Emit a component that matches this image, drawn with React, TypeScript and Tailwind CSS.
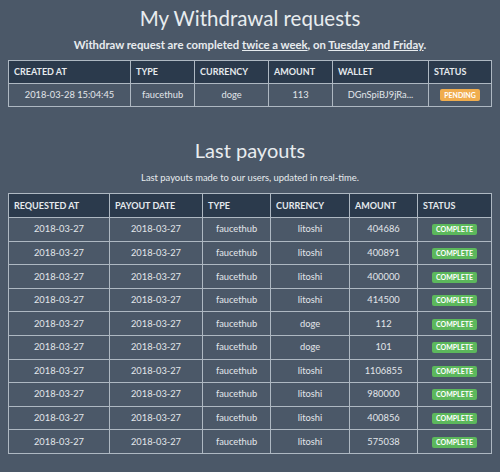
import React from 'react';

const font = { fontFamily: 'Lato, "Open Sans", sans-serif' };

const payouts = [
  ['2018-03-27', '2018-03-27', 'faucethub', 'litoshi', '404686'],
  ['2018-03-27', '2018-03-27', 'faucethub', 'litoshi', '400891'],
  ['2018-03-27', '2018-03-27', 'faucethub', 'litoshi', '400000'],
  ['2018-03-27', '2018-03-27', 'faucethub', 'litoshi', '414500'],
  ['2018-03-27', '2018-03-27', 'faucethub', 'doge', '112'],
  ['2018-03-27', '2018-03-27', 'faucethub', 'doge', '101'],
  ['2018-03-27', '2018-03-27', 'faucethub', 'litoshi', '1106855'],
  ['2018-03-27', '2018-03-27', 'faucethub', 'litoshi', '980000'],
  ['2018-03-27', '2018-03-27', 'faucethub', 'litoshi', '400856'],
  ['2018-03-27', '2018-03-27', 'faucethub', 'litoshi', '575038'],
];

const Th: React.FC<{ children: React.ReactNode; w: string }> = ({ children, w }) => (
  <th className={`${w} border border-[#aeb8c2] bg-[#2b3a4c] px-[5px] text-left text-[9px] font-bold uppercase text-[#e6eaee]`}>
    {children}
  </th>
);

const Td: React.FC<{ children: React.ReactNode }> = ({ children }) => (
  <td className="border border-[#aeb8c2] px-1 text-center text-[9.3px] text-[#e3e7eb]">{children}</td>
);

const Badge: React.FC<{ kind: 'complete' | 'pending' }> = ({ kind }) =>
  kind === 'complete' ? (
    <span className="inline-block rounded-[2px] bg-[#5cb85c] px-[4px] text-[7px] font-bold leading-[11px] text-white">COMPLETE</span>
  ) : (
    <span className="inline-block rounded-[2px] bg-[#f0ad4e] px-[4px] text-[7px] font-bold leading-[12px] text-white">PENDING</span>
  );

export default function App() {
  return (
    <div className="h-[472px] w-[500px] bg-[#4b5868] px-2 text-[#e8ecef]" style={font}>
      <h1 className="pt-[3px] text-center text-[20.5px] leading-[30px]">My Withdrawal requests</h1>
      <p className="mt-[5px] text-center text-[11.3px] font-bold leading-[14px]">
        Withdraw request are completed <span className="underline">twice a week</span>, on{' '}
        <span className="underline">Tuesday and Friday</span>.
      </p>
      <table className="mt-[8px] w-full table-fixed border-collapse">
        <thead>
          <tr className="h-[23px]">
            <Th w="w-[122px]">Created at</Th>
            <Th w="w-[64px]">Type</Th>
            <Th w="w-[74px]">Currency</Th>
            <Th w="w-[64px]">Amount</Th>
            <Th w="w-[96px]">Wallet</Th>
            <Th w="w-[63px]">Status</Th>
          </tr>
        </thead>
        <tbody>
          <tr className="h-[23px]">
            <Td>2018-03-28 15:04:45</Td>
            <Td>faucethub</Td>
            <Td>doge</Td>
            <Td>113</Td>
            <Td>DGnSpiBJ9jRa...</Td>
            <Td>
              <Badge kind="pending" />
            </Td>
          </tr>
        </tbody>
      </table>

      <h2 className="mt-[28px] text-center text-[20px] leading-[30px]">Last payouts</h2>
      <p className="mt-[6px] text-center text-[9.4px] leading-[13px]">
        Last payouts made to our users, updated in real-time.
      </p>
      <table className="mt-[9px] w-full table-fixed border-collapse">
        <thead>
          <tr className="h-[24px]">
            <Th w="w-[101px]">Requested at</Th>
            <Th w="w-[93px]">Payout date</Th>
            <Th w="w-[68px]">Type</Th>
            <Th w="w-[79px]">Currency</Th>
            <Th w="w-[68px]">Amount</Th>
            <Th w="w-[74px]">Status</Th>
          </tr>
        </thead>
        <tbody>
          {payouts.map((r, i) => (
            <tr key={i} className="h-[23.6px]">
              {r.map((c, j) => (
                <Td key={j}>{c}</Td>
              ))}
              <Td>
                <Badge kind="complete" />
              </Td>
            </tr>
          ))}
        </tbody>
      </table>
    </div>
  );
}
